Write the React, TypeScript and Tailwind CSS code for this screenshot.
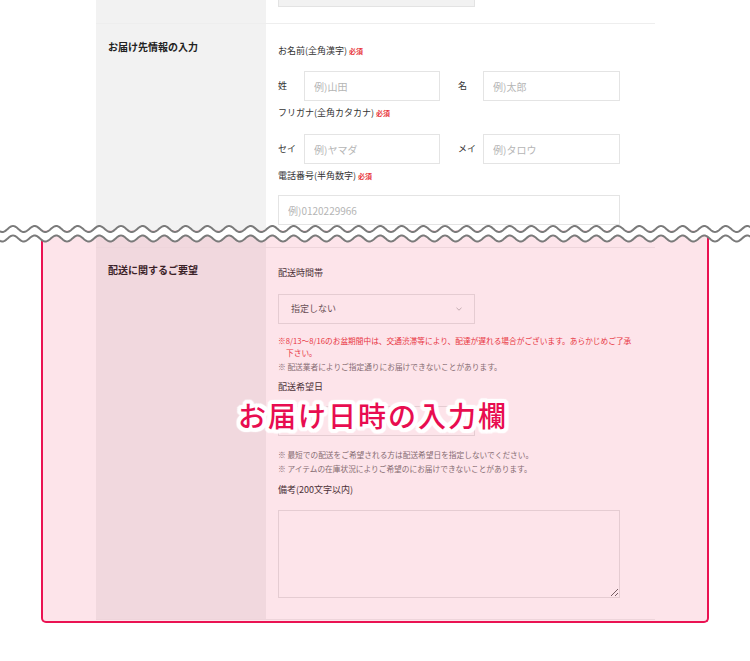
const P = 21.6;
const A = 3;
const X0 = 13;

function wavePts(cy: number) {
  const pts: string[] = [];
  for (let x = -4; x <= 756; x += 1) {
    const y = cy - A * Math.cos((2 * Math.PI * (x - X0)) / P);
    pts.push(`${x},${y.toFixed(2)}`);
  }
  return pts;
}

function Wave() {
  const top = wavePts(11);
  const bottom = wavePts(20.5);
  const band = `M${top.join(" L")} L${[...bottom].reverse().join(" L")} Z`;
  return (
    <svg className="absolute left-0 top-[218px] z-10" width="750" height="30" viewBox="0 0 750 30">
      <path d={band} fill="#fff" />
      <path d={`M${top.join(" L")}`} fill="none" stroke="#7a7a7a" strokeWidth="2" />
      <path d={`M${bottom.join(" L")}`} fill="none" stroke="#7a7a7a" strokeWidth="2" />
    </svg>
  );
}

function Req() {
  return <span className="ml-[2px] text-[7px] font-bold text-[#e8383d]">必須</span>;
}

function Label({ children, req }: { children: React.ReactNode; req?: boolean }) {
  return (
    <p className="text-[9px] leading-[14px] text-[#333]">
      {children}
      {req && <Req />}
    </p>
  );
}

function Field({ placeholder, w }: { placeholder: string; w: string }) {
  return (
    <input
      readOnly
      placeholder={placeholder}
      className={`h-[30px] ${w} border border-[#e4e4e4] bg-white pl-[9px] text-[10px] outline-none placeholder:text-[#b5b5b5]`}
    />
  );
}

function PairRow({ a, b, pa, pb }: { a: string; b: string; pa: string; pb: string }) {
  return (
    <div className="flex items-center text-[9px] text-[#333]">
      <span className="w-[26px]">{a}</span>
      <Field placeholder={pa} w="w-[136px]" />
      <span className="ml-[18px] w-[25px]">{b}</span>
      <Field placeholder={pb} w="w-[137px]" />
    </div>
  );
}

function Note({ children, red }: { children: React.ReactNode; red?: boolean }) {
  return (
    <p className={`pl-[8px] -indent-[8px] text-[7.7px] leading-[12px] ${red ? "text-[#e8383d]" : "text-[#777]"}`}>
      {children}
    </p>
  );
}

export default function App() {
  return (
    <div className="relative h-[661px] w-[750px] overflow-hidden bg-white font-['Noto_Sans_CJK_JP','Noto_Sans',sans-serif]">
      <div className="ml-[96px] w-[559px]">
        {/* previous row, only its bottom shows */}
        <div className="flex h-[24px] border-b border-[#eeeeee]">
          <div className="w-[170px] bg-[#f2f2f2]" />
          <div className="pl-[12px]">
            <div className="h-[7px] w-[197px] border-x border-b border-[#e3e3e3] bg-[#f2f2f2]" />
          </div>
        </div>

        <div className="flex border-b border-[#eeeeee]">
          <div className="w-[170px] shrink-0 bg-[#f2f2f2] pl-[12px] pt-[16px]">
            <h3 className="text-[10px] font-bold leading-[14px] text-[#222]">お届け先情報の入力</h3>
          </div>
          <div className="w-[389px] pl-[12px] pt-[20px] pb-[22px]">
            <Label req>お名前(全角漢字)</Label>
            <div className="mt-[13px]">
              <PairRow a="姓" b="名" pa="例)山田" pb="例)太郎" />
            </div>
            <div className="mt-[5px]">
              <Label req>フリガナ(全角カタカナ)</Label>
            </div>
            <div className="mt-[14px]">
              <PairRow a="セイ" b="メイ" pa="例)ヤマダ" pb="例)タロウ" />
            </div>
            <div className="mt-[5px]">
              <Label req>電話番号(半角数字)</Label>
            </div>
            <div className="mt-[12px]">
              <Field placeholder="例)0120229966" w="w-[342px]" />
            </div>
          </div>
        </div>

        <div className="flex border-b border-[#eeeeee]">
          <div className="w-[170px] shrink-0 bg-[#f2f2f2] pl-[12px] pt-[15px]">
            <h3 className="text-[10px] font-bold leading-[14px] text-[#222]">配送に関するご要望</h3>
          </div>
          <div className="w-[389px] pl-[12px] pt-[18px] pb-[21px]">
            <Label>配送時間帯</Label>
            <div className="mt-[14px] flex h-[30px] w-[197px] items-center justify-between border border-[#e4e4e4] bg-white pl-[12px] pr-[12px] text-[9px] text-[#555]">
              <span>指定しない</span>
              <svg width="6" height="4" viewBox="0 0 6 4">
                <polyline points="0.5,0.8 3,3.2 5.5,0.8" fill="none" stroke="#aaa" strokeWidth="0.8" />
              </svg>
            </div>
            <div className="mt-[11px]">
              <Note red>
                ※8/13～8/16のお盆期間中は、交通渋滞等により、配達が遅れる場合がございます。あらかじめご了承
                <br />
                下さい。
              </Note>
            </div>
            <div className="mt-[2px]">
              <Note>※ 配送業者によりご指定通りにお届けできないことがあります。</Note>
            </div>
            <div className="mt-[7px]">
              <Label>配送希望日</Label>
            </div>
            <div className="mt-[12px] h-[30px] w-[197px] border border-[#e4e4e4] bg-white" />
            <div className="mt-[13px]">
              <Note>※ 最短での配送をご希望される方は配送希望日を指定しないでください。</Note>
            </div>
            <div className="mt-[2px]">
              <Note>※ アイテムの在庫状況によりご希望のにお届けできないことがあります。</Note>
            </div>
            <div className="mt-[8px]">
              <Label>備考(200文字以内)</Label>
            </div>
            <textarea
              readOnly
              className="mt-[13px] block h-[88px] w-[342px] resize border border-[#e4e4e4] bg-white outline-none"
            />
          </div>
        </div>
      </div>

      {/* highlight box over the delivery section */}
      <div className="pointer-events-none absolute left-[41px] top-[230px] h-[393px] w-[668px] rounded-b-[5px] border-x-2 border-b-2 border-[#ea1252] bg-[rgba(238,30,80,0.12)]" />

      <Wave />

      <div className="pointer-events-none absolute left-[373px] top-[415px] z-20 -translate-x-1/2 -translate-y-1/2 whitespace-nowrap text-[28px] font-medium leading-none tracking-[2px] text-[#e80d50] [text-shadow:4px_0_1px_#fff,-4px_0_1px_#fff,0_4px_1px_#fff,0_-4px_1px_#fff,3px_3px_1px_#fff,-3px_3px_1px_#fff,3px_-3px_1px_#fff,-3px_-3px_1px_#fff,4px_2px_1px_#fff,-4px_2px_1px_#fff,4px_-2px_1px_#fff,-4px_-2px_1px_#fff,2px_4px_1px_#fff,-2px_4px_1px_#fff,2px_-4px_1px_#fff,-2px_-4px_1px_#fff,2px_0_0_#fff,-2px_0_0_#fff,0_2px_0_#fff,0_-2px_0_#fff]">
        お届け日時の入力欄
      </div>
    </div>
  );
}
